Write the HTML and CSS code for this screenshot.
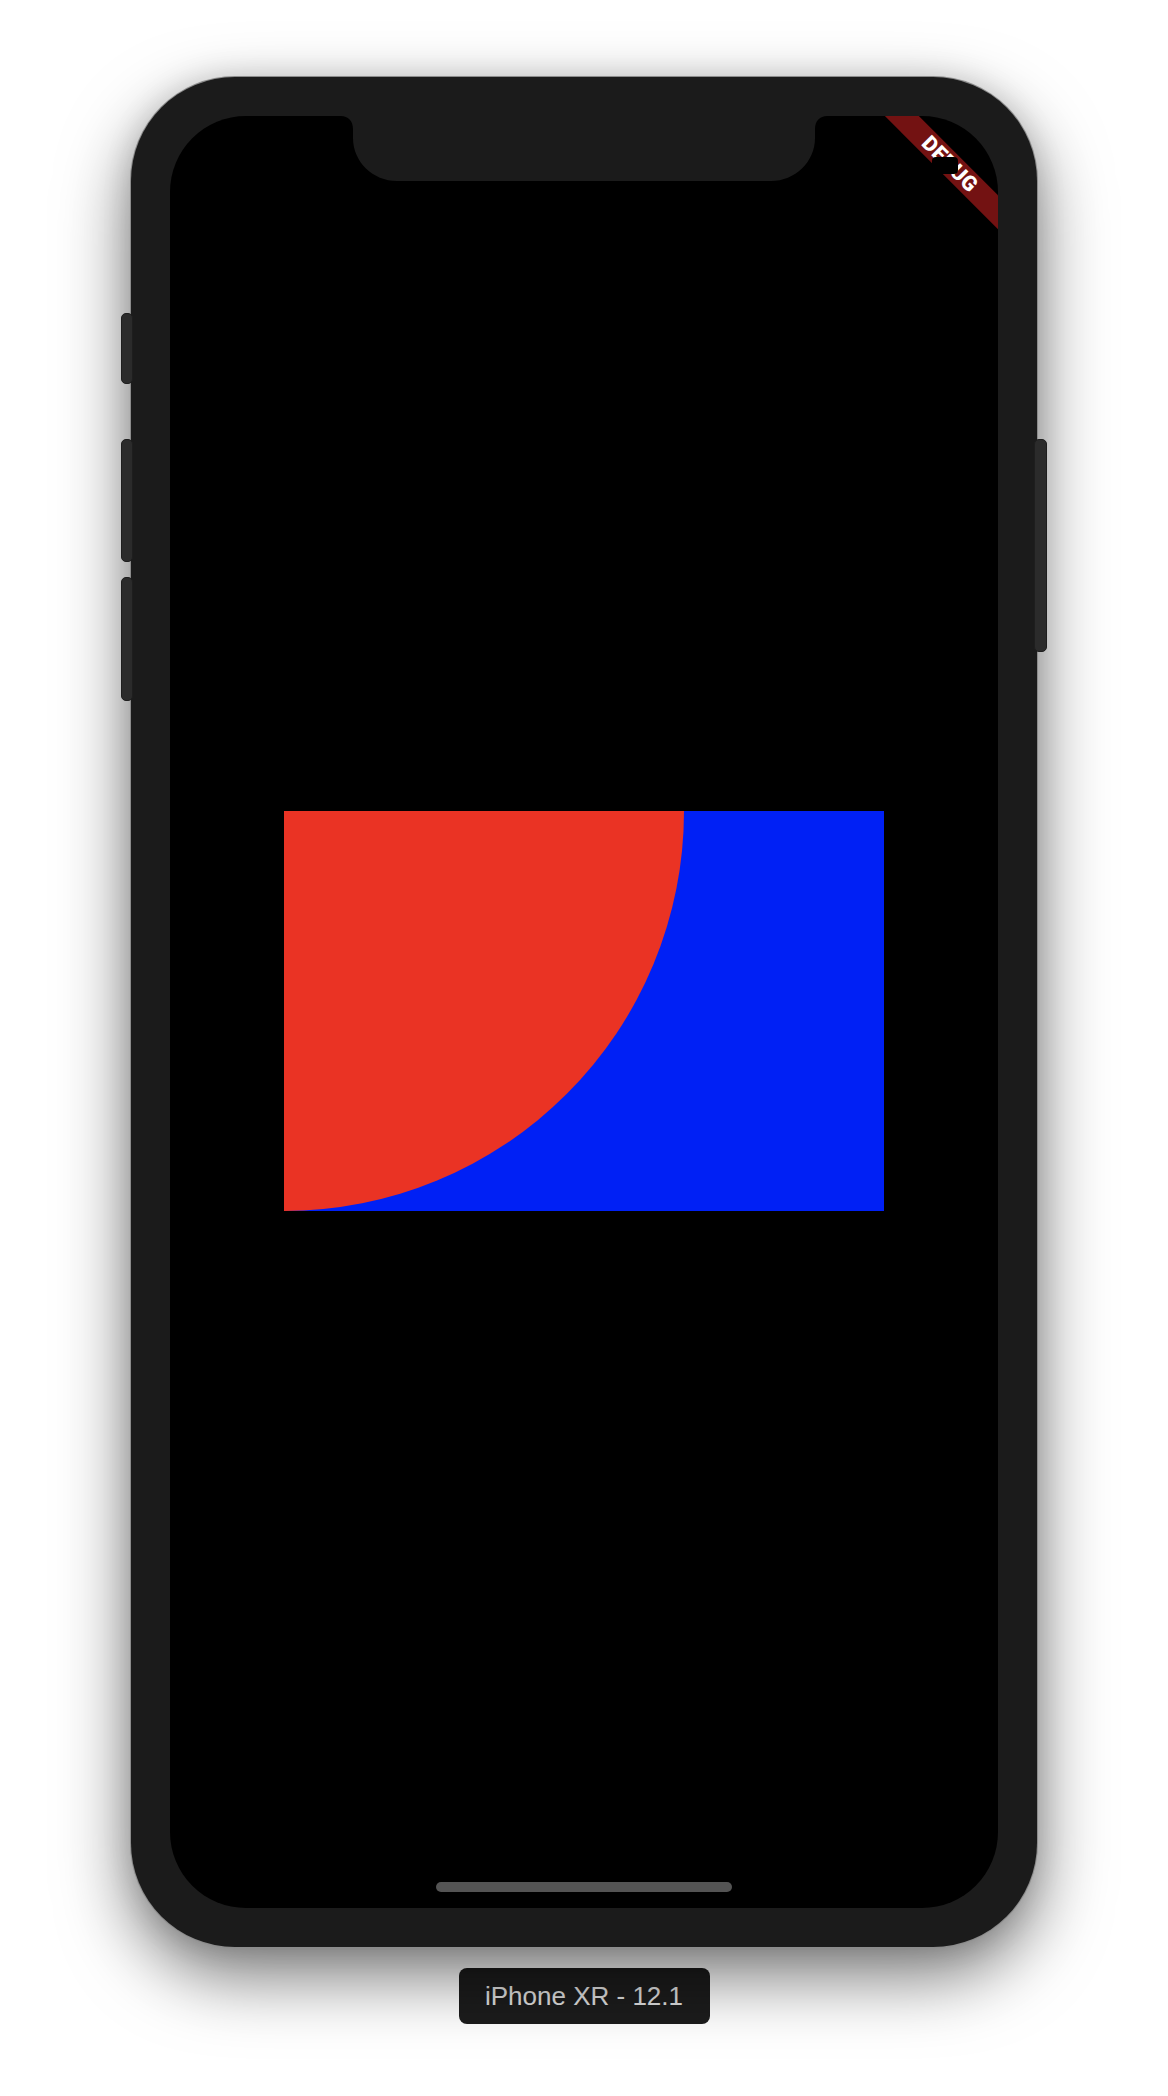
FILE: index.html
```html
<!DOCTYPE html>
<html lang="en">
<head>
<meta charset="utf-8">
<title>iPhone XR - 12.1</title>
<link rel="stylesheet" href="styles.css">
</head>
<body>
<main class="stage">
  <div class="phone">
    <span class="btn btn-l1"></span>
    <span class="btn btn-l2"></span>
    <span class="btn btn-l3"></span>
    <span class="btn btn-r1"></span>
    <div class="screen">
      <div class="shape">
        <div class="quarter"></div>
      </div>
      <svg class="notch" width="486" height="65" viewBox="0 0 486 65" aria-hidden="true">
        <path d="M0 0 L486 0 C479 0 474 5 474 13 L474 22 C474 46 454 65 430 65 L56 65 C32 65 12 46 12 22 L12 13 C12 5 7 0 0 0 Z" fill="#1b1b1b"/>
      </svg>
      <div class="banner"><span>DEBUG</span></div>
      <div class="battery"></div>
      <div class="home"></div>
    </div>
  </div>
  <div class="label">iPhone XR - 12.1</div>
</main>
</body>
</html>
```
FILE: styles.css
```css
html, body {
  margin: 0;
  padding: 0;
  background: #ffffff;
}

.stage {
  width: 1168px;
  height: 2096px;
  display: flex;
  flex-direction: column;
  align-items: center;
  padding-top: 77px;
  box-sizing: border-box;
  overflow: hidden;
}

.phone {
  position: relative;
  width: 906px;
  height: 1870px;
  padding: 39px;
  box-sizing: border-box;
  background: #1b1b1b;
  border-radius: 104px;
  box-shadow: 0 0 0 1px #8c8c8c, 0 28px 70px rgba(0, 0, 0, 0.55), 0 0 30px rgba(0, 0, 0, 0.12);
}

.btn {
  position: absolute;
  width: 12px;
  background: #2b2b2b;
  border: 1px solid #1e1e1e;
  box-sizing: border-box;
  border-radius: 5px;
  z-index: 1;
}

.btn-l1 { left: -10px; top: 236px; height: 71px; }
.btn-l2 { left: -10px; top: 362px; height: 123px; }
.btn-l3 { left: -10px; top: 500px; height: 124px; }
.btn-r1 { right: -10px; top: 362px; height: 213px; width: 13px; }

.screen {
  position: relative;
  width: 828px;
  height: 1792px;
  background: #000000;
  border-radius: 76px;
  overflow: hidden;
  display: flex;
  align-items: center;
  justify-content: center;
}

.shape {
  width: 600px;
  height: 400px;
  background: #0020f5;
  margin-top: -2px;
}

.quarter {
  width: 400px;
  height: 400px;
  background: #ea3324;
  border-bottom-right-radius: 400px;
}

.notch {
  position: absolute;
  top: 0;
  left: 171px;
  display: block;
}

.banner {
  position: absolute;
  left: 748px;
  top: 56px;
  width: 160px;
  height: 24px;
  background: rgba(183, 28, 28, 0.627);
  transform-origin: 80px -56px;
  transform: rotate(45deg);
  display: flex;
  align-items: center;
  justify-content: center;
}

.banner span {
  font-family: Roboto, "DejaVu Sans", sans-serif;
  font-weight: 900;
  font-size: 21px;
  line-height: 1;
  color: #ffffff;
  letter-spacing: 0.4px;
}

.battery {
  position: absolute;
  left: 762px;
  top: 41px;
  width: 26px;
  height: 17px;
  background: #000000;
  border-radius: 4px;
}

.home {
  position: absolute;
  left: 266px;
  bottom: 16px;
  width: 296px;
  height: 10px;
  border-radius: 5px;
  background: #545454;
}

.label {
  margin-top: 21px;
  width: 251px;
  height: 56px;
  background: #1c1c1c;
  border-radius: 8px;
  display: flex;
  align-items: center;
  justify-content: center;
  font-family: "Liberation Sans", Arial, sans-serif;
  font-size: 26px;
  color: #e0e0e0;
}
```
